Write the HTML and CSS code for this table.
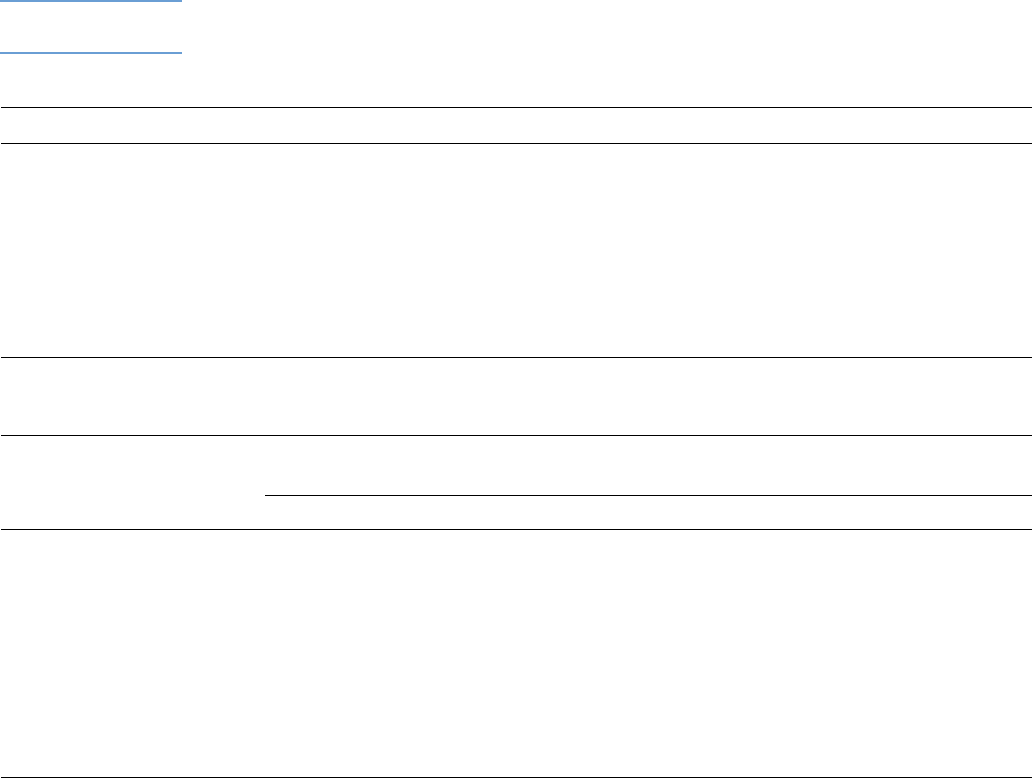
FILE: index.html
```html
<!DOCTYPE html>
<html lang="en">
<head>
    <meta charset="UTF-8">
    <meta name="viewport" content="width=device-width, initial-scale=1.0">
    <title>Page</title>
    <link rel="stylesheet" href="styles.css">
</head>
<body>
    <div class="tabs">
        <div class="tab-line"></div>
        <div class="tab-line"></div>
    </div>

    <div class="sheet">
        <div class="row row-head"></div>
        <div class="row row-tall"></div>
        <div class="row row-mid"></div>
        <div class="row row-split">
            <div class="cell-label"></div>
            <div class="cell-body">
                <div class="sub-row"></div>
            </div>
        </div>
        <div class="row row-last"></div>
    </div>
</body>
</html>
```

FILE: styles.css
```css
body {
    margin: 0;
    font-family: "Liberation Sans", Arial, sans-serif;
    background: #fff;
}
.tabs {
    display: flex;
    flex-direction: column;
    gap: 50px;
}
.tab-line {
    width: 182px;
    height: 2px;
    background: #6a9ed4;
}
.sheet {
    margin-top: 53px;
    margin-left: 1px;
    border-bottom: 1px solid #000;
}
.row {
    border-top: 1px solid #000;
}
.row-head {
    height: 35px;
}
.row-tall {
    height: 213px;
}
.row-mid {
    height: 77px;
}
.row-split {
    height: 93px;
    display: flex;
}
.cell-label {
    width: 264px;
}
.cell-body {
    flex: 1;
}
.sub-row {
    height: 59px;
    border-bottom: 1px solid #000;
}
.row-last {
    height: 247px;
}
```
